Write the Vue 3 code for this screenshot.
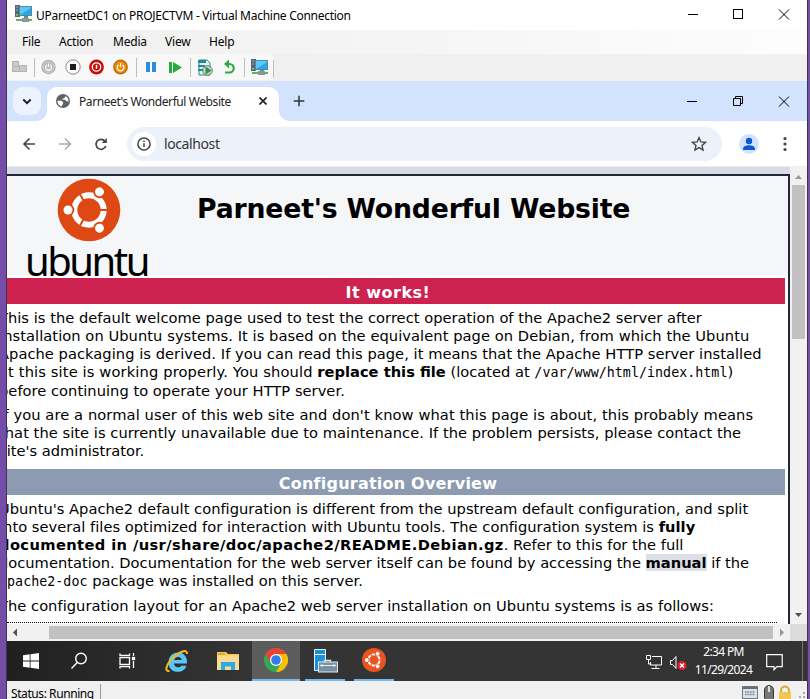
<script setup>
const menus = [
  { name: 'File', cls: 'm-file' },
  { name: 'Action', cls: 'm-action' },
  { name: 'Media', cls: 'm-media' },
  { name: 'View', cls: 'm-view' },
  { name: 'Help', cls: 'm-help' },
]
</script>

<template>
  <div class="screen">
    <div class="edge left"></div>
    <main class="vm">
      <header class="titlebar">
        <svg class="vm-icon" width="18" height="18" viewBox="0 0 18 18">
          <rect x="0" y="0" width="5" height="12" fill="#59666e" /><path d="M1 2h2M1 5h2" stroke="#9ab" /><rect x="1" y="9" width="2" height="1.500" fill="#6fdc60" />
          <rect x="4" y="1" width="13" height="10" fill="#4d8aa9" /><rect x="5" y="2" width="11" height="8" fill="#5cc8f5" /><path d="M5 10L16 3v7z" fill="#2ba6e4" />
          <path d="M9 11h4v3H9z" fill="#7b868c" /><path d="M1 14h16v2H1z" fill="#62b35a" /><path d="M7 13h7v4H7z" fill="#8b9697" />
        </svg>
        <span class="title">UParneetDC1 on PROJECTVM - Virtual Machine Connection</span>
        <svg class="wincontrols" width="110" height="30" viewBox="0 0 110 30" fill="none" stroke="#000">
          <path d="M1 14.500h10" /><rect x="46.500" y="9.500" width="9" height="9" /><path d="M92 9.500l10 10M102 9.500l-10 10" />
        </svg>
      </header>

      <nav class="menubar">
        <span v-for="m in menus" :key="m.name" :class="m.cls">{{ m.name }}</span>
      </nav>

      <div class="toolstrip">
        <svg width="273" height="27" viewBox="0 0 273 27">
          <rect width="266" height="26" rx="3" fill="#f8f8f8" />
          <g fill="#c9c9c9" stroke="#b3b3b3"><rect x="5.500" y="7.500" width="6" height="5" /><rect x="5.500" y="12.500" width="7" height="5" /><rect x="12.500" y="11.500" width="7" height="6" /></g>
          <g stroke="#bdbdbd"><path d="M27.500 4v19M129.500 4v19M183.500 4v19M237.500 4v19M266.500 6v18" /></g>
          <circle cx="41.500" cy="13" r="7.200" fill="#aaa" /><circle cx="41.500" cy="13" r="5.800" fill="#bdbdbd" stroke="#ddd" stroke-width=".6" />
          <path d="M39.700 11a3 3 0 1 0 3.600 0M41.500 9.500v3" fill="none" stroke="#fff" stroke-width="1.200" />
          <circle cx="66" cy="13" r="7.200" fill="#fff" stroke="#888" /><rect x="63" y="10" width="6" height="6" fill="#1d1d1d" />
          <circle cx="89.500" cy="13" r="7.400" fill="#c90c0c" /><circle cx="89.500" cy="13" r="4.200" fill="none" stroke="#fff" stroke-width="1.300" /><path d="M89.500 10.800v4" stroke="#fff" stroke-width="1.500" />
          <circle cx="113.500" cy="13" r="7.400" fill="#bd6a08" /><circle cx="113.500" cy="13" r="6" fill="#ef8b09" />
          <path d="M111.400 11a3.300 3.300 0 1 0 4.200 0M113.500 9v4" fill="none" stroke="#fff" stroke-width="1.300" />
          <path d="M139 8h4v10h-4zM145 8h4v10h-4z" fill="#2d8ce0" />
          <path d="M162 8h3v11h-3zM166 8v11l9-5.500z" fill="#22ad3c" />
          <path d="M192 6h8l3 3v12h-11z" fill="#e4f5f4" stroke="#218c8e" /><path d="M191 6h8v3h-8zM191 11h7v2h-7zM191 15h5v2h-5z" fill="#218c8e" />
          <circle cx="200.500" cy="16.500" r="4.800" fill="#d0d0d0" stroke="#777" /><path d="M198.500 12.500v8l6-4z" fill="#18a13a" />
          <path d="M218 10h4.500a4.200 4.200 0 0 1 0 8.500H218" fill="none" stroke="#2faa40" stroke-width="2.200" /><path d="M217 10l5-4.500v9z" fill="#2faa40" />
          <g transform="translate(244 5)"><rect x="0" y="0" width="5" height="12" fill="#59666e" /><path d="M1 2h2M1 5h2" stroke="#9ab" /><rect x="1" y="9" width="2" height="1.500" fill="#6fdc60" /><rect x="4" y="1" width="13" height="10" fill="#4d8aa9" /><rect x="5" y="2" width="11" height="8" fill="#5cc8f5" /><path d="M5 10L16 3v7z" fill="#2ba6e4" /><path d="M9 11h4v3H9z" fill="#7b868c" /><path d="M1 13h16v2H1z" fill="#62b35a" /><path d="M7 12h7v4H7z" fill="#8b9697" /></g>
        </svg>
      </div>

      <div class="tabstrip">
        <div class="tabsearch"><svg width="28" height="28" viewBox="0 0 28 28"><path d="M10.300 12.500l3.700 3.700 3.700-3.700" fill="none" stroke="#1f1f1f" stroke-width="2" /></svg></div>
        <div class="tab">
          <svg class="globe" width="14" height="14" viewBox="0 0 14 14"><circle cx="7" cy="7" r="7" fill="#5f6368" /><path d="M1.400 6.800h4l1.700 1.500v1.600l-1 .8v1.900C3 12 1.400 9.600 1.400 6.800zM9.300 1.900v1.200L7.900 4.400H6.500v1.300h2.700l1 1.600h1.400l.8.600c.5-2.700-.8-5.100-3.100-6z" fill="#fff" /></svg>
          <span class="tabtitle">Parneet's Wonderful Website</span>
          <svg class="tabclose" width="8" height="8" viewBox="0 0 8 8"><path d="M.5.5l7 7M7.500.5l-7 7" stroke="#222" stroke-width="1.700" /></svg>
        </div>
        <svg class="newtab" width="12" height="12" viewBox="0 0 12 12"><path d="M6 .7v10.600M.7 6h10.600" stroke="#333" stroke-width="1.500" /></svg>
        <svg class="wincontrols" width="110" height="40" viewBox="0 0 110 40" fill="none" stroke="#000"><path d="M0 20.500h10" /><path d="M46.500 17.500h7v7h-7zM48.500 17v-1.500h7v7H54M92 15.500l10 10M102 15.500l-10 10" /></svg>
      </div>

      <div class="addressbar">
        <svg width="110" height="46" viewBox="0 0 110 46" fill="none" stroke-width="1.600">
          <path d="M28 23H17.500M22.500 17.500L17 23l5.500 5.500" stroke="#444" /><path d="M52 23h11M58 17.500l5.500 5.500-5.500 5.500" stroke="#aaa" />
          <path d="M98 20.200A5 5 0 1 0 98.800 25" stroke="#444" stroke-width="1.700" /><path d="M99.800 17v5h-5z" fill="#444" />
        </svg>
        <div class="omnibox">
          <span class="site"><svg width="14" height="14" viewBox="0 0 14 14"><circle cx="7" cy="7" r="6.100" fill="none" stroke="#444" stroke-width="1.500" /><path d="M7 6.200V10M7 3.600v1.500" stroke="#444" stroke-width="1.500" /></svg></span>
          <span class="url">localhost</span>
          <svg class="star" width="16" height="16" viewBox="0 0 16 16"><path d="M8 1.600l1.850 4.300 4.700.45-3.550 3.100 1.050 4.600L8 11.600l-4.050 2.450L5 9.450l-3.550-3.100 4.700-.45z" fill="none" stroke="#444" stroke-width="1.350" /></svg>
        </div>
        <svg class="profile" width="60" height="46" viewBox="0 0 60 46"><circle cx="20" cy="23" r="10" fill="#d3e3fd" /><circle cx="20" cy="20" r="3.200" fill="#0b57d0" /><path d="M14 29v-1.200c0-2.500 3.200-3.600 6-3.600s6 1.100 6 3.600V29z" fill="#0b57d0" /><g fill="#444"><circle cx="56" cy="17.500" r="1.600" /><circle cx="56" cy="23" r="1.600" /><circle cx="56" cy="28.500" r="1.600" /></g></svg>
      </div>

      <div class="viewport">
        <section class="page">
          <div class="sheet">
            <div class="pagehead">
              <div class="logo">
                <svg width="64" height="64" viewBox="-32 -32 64 64">
                  <circle r="31.300" fill="#dd4814" /><circle r="14.700" fill="none" stroke="#fff" stroke-width="6" />
                  <g v-for="a in [60, 180, 300]" :key="a" :transform="`rotate(${a})`"><circle cx="21" r="6.300" fill="#dd4814" /><circle cx="21" r="4.500" fill="#fff" /></g>
                  <g v-for="a in [0, 120, 240]" :key="a" :transform="`rotate(${a})`"><path d="M9 0h11" stroke="#dd4814" stroke-width="2" /></g>
                </svg>
                <span class="wordmark">ubuntu</span>
              </div>
              <h1>Parneet's Wonderful Website</h1>
            </div>
            <h2 class="red"><span>It works!</span></h2>
            <div class="copy first">
              <p>
                <span class="l1">This is the default welcome page used to test the correct operation of the Apache2 server after</span>
                <span class="l2">installation on Ubuntu systems. It is based on the equivalent page on Debian, from which the Ubuntu</span>
                <span class="l3">Apache packaging is derived. If you can read this page, it means that the Apache HTTP server installed</span>
                <span class="l4 tall"><em>at this site is working properly. You should </em><b>replace this file</b> (located at <code>/var/www/html/index.html</code>)</span>
                <span class="l5">before continuing to operate your HTTP server.</span>
              </p>
              <p>
                <span class="l6">If you are a normal user of this web site and don't know what this page is about, this probably means</span>
                <span class="l7">that the site is currently unavailable due to maintenance. If the problem persists, please contact the</span>
                <span class="l8">site's administrator.</span>
              </p>
            </div>
            <h2 class="slate"><span>Configuration Overview</span></h2>
            <div class="copy second">
              <p>
                <span class="l9">Ubuntu's Apache2 default configuration is different from the upstream default configuration, and split</span>
                <span class="l10">into several files optimized for interaction with Ubuntu tools. The configuration system is <b>fully</b></span>
                <span class="l11"><b>documented in /usr/share/doc/apache2/README.Debian.gz</b>. Refer to this for the full</span>
                <span class="l12">documentation. Documentation for the web server itself can be found by accessing the <a>manual</a> if the</span>
                <span class="l13 tall"><code>apache2-doc</code> package was installed on this server.</span>
              </p>
              <p><span class="l14">The configuration layout for an Apache2 web server installation on Ubuntu systems is as follows:</span></p>
            </div>
            <div class="dots"></div>
          </div>
        </section>
        <aside class="vscroll">
          <svg width="17" height="457" viewBox="0 0 17 457"><path d="M5 12l3.500-4 3.500 4z" fill="#999" /><rect x="2" y="18" width="13" height="154" fill="#c1c1c1" /><path d="M5 446l3.500 4 3.500-4z" fill="#505050" /></svg>
        </aside>
      </div>
      <div class="hscroll"><svg width="800" height="17" viewBox="0 0 800 17"><path d="M10 4.500v8l-4-4z" fill="#505050" /><rect x="42" y="2" width="724" height="13" fill="#c1c1c1" /><path d="M773 4.500v8l4-4z" fill="#999" /><rect x="783" width="17" height="17" fill="#dcdcdc" /></svg></div>

      <footer class="taskbar">
        <div class="task start"><svg width="16" height="16" viewBox="0 0 16 16" fill="#fff"><path d="M0 2.300l6.700-1v6.200H0zM7.500 1.200L16 0v7.500H7.500zM0 8.400h6.700v6.300L0 13.700zM7.500 8.400H16V16l-8.500-1.200z" /></svg></div>
        <div class="task search"><svg width="18" height="18" viewBox="0 0 18 18" fill="none" stroke="#fff" stroke-width="1.400"><circle cx="11" cy="6.500" r="5.300" /><path d="M7.200 10.500L1.500 16.500" /></svg></div>
        <div class="task view"><svg width="18" height="18" viewBox="0 0 18 18" fill="none" stroke="#fff" stroke-width="1.300"><path d="M2 5.500h9.500v7H2zM2 1.500v1.800h9.500V1.500M2 16.500v-1.800h9.500v1.800M15.500 1v3M15.500 9v7" /><rect x="14.500" y="5.500" width="2" height="2" fill="#fff" /></svg></div>
        <div class="task ie"><svg width="25" height="25" viewBox="0 0 25 25"><path d="M22 14.500H9c0 4.200 5.600 4.900 7.300 2.300h5.200c-1.300 4-4.600 6-8.700 6-5.500 0-9.300-3.500-9.300-9.300S7.400 3.500 12.900 3.500c6.300 0 9.600 4.700 9.100 11zM9.200 11h7.500c-.3-4-6.700-4-7.500 0z" fill="#5bc5f5" fill-rule="evenodd" /><path d="M4.500 22C-1 23 1 15 9 8 16 1.500 22.500 0 22 5" fill="none" stroke="#f5bd24" stroke-width="2" /></svg></div>
        <div class="task folder"><svg width="22" height="20" viewBox="0 0 22 20"><path d="M0 1h9l2 2h11v16H0z" fill="#f6ca59" /><path d="M1 2h7v2H1z" fill="#e3a52c" /><path d="M0 4.500h22V19H0z" fill="#fbdb90" /><path d="M4 19v-8h14v8h-4v-3.500H8V19z" fill="#2da9e8" /></svg></div>
        <div class="task active"><svg width="24" height="24" viewBox="0 0 24 24"><circle cx="12" cy="12" r="12" fill="#34a853" /><path d="M1.600 6A12 12 0 0 1 22.400 6H12l-5.200 9z" fill="#ea4335" /><path d="M22.400 6A12 12 0 0 1 12 24l5.200-9L12 6z" fill="#fbbc05" /><circle cx="12" cy="12" r="6" fill="#fff" /><circle cx="12" cy="12" r="4.800" fill="#2f7de9" /></svg></div>
        <div class="task open"><svg width="25" height="25" viewBox="0 0 25 25"><path d="M1.500 1.500h11v21h-11z" fill="#1c8fd6" stroke="#e8f5fc" /><path d="M1 6.500h11" stroke="#fff" /><path d="M11.500 14v-1.500h6V14" fill="none" stroke="#dce6ee" stroke-width="1.300" /><rect x="5.500" y="14" width="19" height="10" fill="#7890a4" stroke="#dce6ee" /><path d="M7 17.500h16M9 16v3M21 16v3" stroke="#eee" /></svg></div>
        <div class="task open ubuntu"><svg width="24" height="24" viewBox="-12 -12 24 24"><circle r="12" fill="#e95420" /><circle r="5.600" fill="none" stroke="#fff" stroke-width="1.900" /><g v-for="a in [60, 180, 300]" :key="a" :transform="`rotate(${a})`"><circle cx="7.200" r="2.700" fill="#e95420" /><circle cx="7.200" r="1.900" fill="#fff" /></g><g v-for="a in [0, 120, 240]" :key="a" :transform="`rotate(${a})`"><path d="M4 0h4" stroke="#e95420" /></g></svg></div>
        <div class="tray">
          <svg width="44" height="20" viewBox="0 0 44 20" fill="none" stroke="#fff"><path d="M6 4.500h9.500v8.500H4.500v-3M10 13v3.500M5.500 16.500h8M.5 3.500h4v4h-4zM2.500 7.500V12h2" /><path d="M24.500 8.500h2l3.500-4v12l-3.500-4h-2z" /><circle cx="36" cy="13.500" r="4.500" fill="#e02028" stroke="none" /><path d="M34 11.500l4 4M38 11.500l-4 4" stroke-width="1.300" /></svg>
          <div class="clock"><span class="time">2:34 PM</span><span class="date">11/29/2024</span></div>
          <svg class="notice" width="17" height="17" viewBox="0 0 17 17" fill="none" stroke="#fff" stroke-width="1.200"><path d="M.7.700h15.500v12H11l-3 3v-3H.7z" /></svg>
          <i class="desktop"></i>
        </div>
      </footer>
      <div class="status">
        <span class="state">Status: Running</span>
        <svg width="66" height="18" viewBox="0 0 66 18"><rect x="1.500" y="5.500" width="15" height="12" fill="#dfe3e6" stroke="#6f7a82" /><path d="M2 7h14" stroke="#5d7186" stroke-width="2" /><path d="M4 11h10M4 13.500h10" stroke="#76828b" stroke-width="1.500" stroke-dasharray="1 .6" /><rect x="23.500" y="4.500" width="9" height="16" rx="4.500" fill="#777" stroke="#333" /><path d="M28 5v6" stroke="#ddd" stroke-width="2" /><path d="M40 12V9.500a4 4 0 0 1 8 0V12" fill="none" stroke="#dba934" stroke-width="2" /><rect x="38" y="11" width="12" height="8" fill="#f4c651" /><path d="M62 11h2v2h-2zM58 15h2v2h-2zM62 15h2v2h-2z" fill="#aaa" /></svg>
      </div>
    </main>
    <div class="edge right"></div>
  </div>
</template>

<style>
body { margin: 0; overflow: hidden; }
</style>
<style scoped>
* { box-sizing: border-box; }
.screen { width: 810px; height: 699px; display: flex; overflow: hidden; background: #f0f0f0; color: #000; font: 12px "Noto Sans", sans-serif; }
svg { display: block; flex: none; }
.edge { flex: none; background: #744da9; }
.left { width: 7px; border-right: 1px solid #40334f; }
.right { width: 3px; border-left: 1px solid #40334f; }
.vm { width: 800px; display: flex; flex-direction: column; flex: none; overflow: hidden; }
.vm > * { flex: none; }
.titlebar { height: 30px; background: #fff; display: flex; align-items: center; padding-left: 8px; }
.vm-icon { margin-top: -2px; }
.title { margin-left: 3px; white-space: nowrap; letter-spacing: -.27px; }
.wincontrols { margin: 0 10px 0 auto; }
.menubar { height: 24px; padding: 0 0 1px 15px; background: linear-gradient(90deg, #f0f0f0, #f5f5f5 50%, #fdfdfd); display: flex; align-items: center; letter-spacing: -.2px; }
.m-file { width: 37px; } .m-action { width: 54px; } .m-media { width: 52px; } .m-view { width: 44px; }
.toolstrip { height: 27px; background: #f0f0f0; }
.tabstrip { height: 40px; background: #d3e3fd; display: flex; align-items: center; }
.tabsearch { width: 28px; height: 28px; margin-left: 6px; border-radius: 9px; background: #ecf3fe; }
.tab { align-self: flex-end; width: 232px; height: 34px; margin-left: 6px; border-radius: 10px 10px 0 0; background: #fff; display: flex; align-items: center; padding: 0 12px 5px 9px; position: relative; }
.tab::before, .tab::after { content: ""; position: absolute; width: 10px; height: 10px; bottom: 0; }
.tab::before { left: -10px; background: radial-gradient(circle at 0 0, transparent 9.500px, #fff 10px); }
.tab::after { right: -10px; background: radial-gradient(circle at 100% 0, transparent 9.500px, #fff 10px); }
.globe { margin-top: -1px; }
.tabtitle { margin-left: 9px; color: #222; letter-spacing: -.42px; white-space: nowrap; }
.tabclose { margin-left: auto; margin-top: -1px; }
.newtab { margin-left: 14px; }
.addressbar { height: 46px; background: #fff; display: flex; align-items: center; border-bottom: 1px solid #eee; }
.omnibox { width: 595px; height: 34px; margin-left: 10px; border-radius: 17px; background: #edf1fa; display: flex; align-items: center; padding: 0 15px 0 5px; }
.site { width: 24px; height: 24px; border-radius: 50%; background: #fff; display: grid; place-items: center; }
.url { margin-left: 8px; font-size: 14px; color: #333; letter-spacing: -.4px; }
.star { margin-left: auto; }
.profile { margin-left: 7px; }
.viewport { height: 457px; display: flex; }
.page { width: 783px; height: 457px; padding-top: 7px; background: #d8dbe2; overflow: hidden; }
.sheet { width: 783px; height: 450px; background: #fff; border: solid #212738; border-width: 2px 2px 0 0; font-family: "DejaVu Sans", sans-serif; font-size: 14.670px; overflow: hidden; }
.pagehead { height: 99px; background: #f5f6f7; display: flex; }
.logo { width: 160px; flex: none; padding: 2px 0 0 20px; }
.logo svg { margin-left: 29.500px; }
.wordmark { display: block; font: 40px/44px "Noto Sans", sans-serif; letter-spacing: -2.500px; margin-top: -3px; margin-left: -2px; position: relative; }
h1 { margin: 18px 0 0 30px; font-size: 26.700px; line-height: 30px; white-space: nowrap; letter-spacing: -.18px; }
h2 { width: 778px; height: 26px; margin: 0; color: #fff; font-size: 16px; line-height: 29px; text-align: center; }
.red { background: #cd214f; margin-top: 3px; padding-right: 16px; letter-spacing: .5px; }
.slate { background: #8c9bb1; letter-spacing: .22px; }
.slate span { margin-left: -16px; }
.copy p { margin: 0 0 6px -8px; line-height: 18px; }
.copy span { display: block; height: 18px; white-space: nowrap; }
.copy .tall { height: 19px; }
.copy em { font-style: normal; letter-spacing: .13px; }
.l1, .l10 { letter-spacing: .02px; }
.l9 { letter-spacing: .01px; }
.l2 { letter-spacing: .06px; }
.l3, .l7 { letter-spacing: .04px; }
.l5, .l14 { letter-spacing: .03px; }
.l6 { letter-spacing: .09px; }
.l11 b { letter-spacing: .39px; }
.first { height: 165px; padding-top: 5px; }
.second { height: 127px; padding-top: 5px; }
code { font: 13.300px "DejaVu Sans Mono", monospace; letter-spacing: .04px; }
a { background: #dcdfe6; font-weight: bold; }
.dots { border-top: 1px dotted #000; width: 770px; }
.vscroll { width: 17px; background: #f1f1f1; }
.hscroll { height: 17px; background: #f1f1f1; }
.taskbar { height: 40px; background: linear-gradient(90deg, #202020, #343434 30%, #333); display: flex; }
.task { width: 49px; display: grid; place-items: center; flex: none; }
.start { width: 47px; } .search { width: 49px; } .view { width: 48px; } .ie { width: 53px; } .folder { width: 48px; }
.task.active { width: 48px; background: #5c5c5c; border-bottom: 2px solid #76b9ed; }
.task.open { width: 40px; margin-left: 5px; border-bottom: 2px solid #76b9ed; }
.task.ubuntu { margin-left: 9px; }
.tray { margin-left: auto; display: flex; align-items: center; color: #fff; padding-right: 4px; }
.tray > svg { margin-top: 2px; }
.clock { width: 69px; text-align: center; line-height: 18px; letter-spacing: -.63px; display: flex; flex-direction: column; margin-left: -1px; }
.notice { margin-left: 8px; }
.desktop { width: 1px; height: 40px; background: #777; margin-left: 19px; }
.status { height: 18px; background: #f0f0f0; display: flex; justify-content: space-between; overflow: hidden; }
.state { border-right: 1px solid #999; padding-left: 4px; width: 94px; height: 15px; margin-top: 3px; line-height: 20px; font-size: 12px; letter-spacing: -.42px; white-space: nowrap; }
</style>
